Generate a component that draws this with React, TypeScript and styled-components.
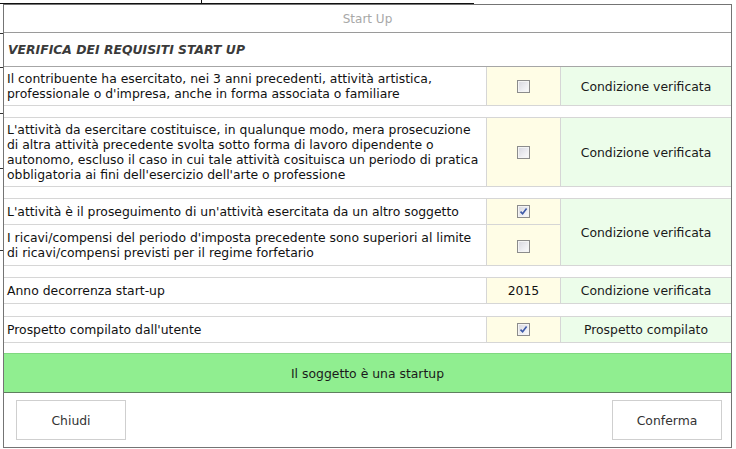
import React from "react";
import styled, { createGlobalStyle } from "styled-components";

const GlobalStyle = createGlobalStyle`
  html, body {
    margin: 0;
    padding: 0;
    background: #fff;
  }
  body {
    font-family: "DejaVu Sans", Verdana, sans-serif;
    font-size: 12.4px;
    color: #111;
  }
`;

type Item = {
  lines: string[];
  height: number;
};

const Check = ({ checked }: { checked?: boolean }) => (
  <Box>
    {checked && (
      <svg width="9" height="9" viewBox="0 0 9 9">
        <path
          d="M1.5 4.6 L3.6 6.8 L7.6 1.4"
          fill="none"
          stroke="#3d5aa8"
          strokeWidth="1.6"
        />
      </svg>
    )}
  </Box>
);

const App = () => {
  const first: Item = {
    lines: [
      "Il contribuente ha esercitato, nei 3 anni precedenti, attività artistica,",
      "professionale o d'impresa, anche in forma associata o familiare",
    ],
    height: 38,
  };
  const second: Item = {
    lines: [
      "L'attività da esercitare costituisce, in qualunque modo, mera prosecuzione",
      "di altra attività precedente svolta sotto forma di lavoro dipendente o",
      "autonomo, escluso il caso in cui tale attività cosituisca un periodo di pratica",
      "obbligatoria ai fini dell'esercizio dell'arte o professione",
    ],
    height: 68,
  };

  return (
    <>
      <GlobalStyle />
      <Page>
        <Dialog>
          <TitleBar>Start Up</TitleBar>
          <SectionHeader>VERIFICA DEI REQUISITI START UP</SectionHeader>

          <Row $height={first.height}>
            <TextCell>
              {first.lines.map((l) => (
                <div key={l}>{l}</div>
              ))}
            </TextCell>
            <CheckCell>
              <Check />
            </CheckCell>
            <StatusCell>Condizione verificata</StatusCell>
          </Row>
          <Spacer $height={11} />

          <Row $height={second.height}>
            <TextCell>
              {second.lines.map((l) => (
                <div key={l}>{l}</div>
              ))}
            </TextCell>
            <CheckCell>
              <Check />
            </CheckCell>
            <StatusCell>Condizione verificata</StatusCell>
          </Row>
          <Spacer $height={11} />

          <GroupRow>
            <TextCell $split>
              <div>L'attività è il proseguimento di un'attività esercitata da un altro soggetto</div>
            </TextCell>
            <CheckCell $split>
              <Check checked />
            </CheckCell>
            <GroupStatus>Condizione verificata</GroupStatus>
            <TextCell>
              <div>I ricavi/compensi del periodo d'imposta precedente sono superiori al limite</div>
              <div>di ricavi/compensi previsti per il regime forfetario</div>
            </TextCell>
            <CheckCell $low>
              <Check />
            </CheckCell>
          </GroupRow>
          <Spacer $height={11} />

          <Row $height={25}>
            <TextCell>Anno decorrenza start-up</TextCell>
            <CheckCell>2015</CheckCell>
            <StatusCell>Condizione verificata</StatusCell>
          </Row>
          <Spacer $height={12} />

          <Row $height={25}>
            <TextCell>Prospetto compilato dall'utente</TextCell>
            <CheckCell>
              <Check checked />
            </CheckCell>
            <StatusCell>Prospetto compilato</StatusCell>
          </Row>
          <Gap />

          <Banner>Il soggetto è una startup</Banner>

          <Footer>
            <Button>Chiudi</Button>
            <Button>Conferma</Button>
          </Footer>
        </Dialog>
      </Page>
    </>
  );
};

export default App;

const Page = styled.div`
  position: relative;
  width: 736px;
  height: 449px;
  overflow: hidden;
  background:
    linear-gradient(#111, #111) 0 3px / 474px 1px no-repeat,
    linear-gradient(#111, #111) 201px 0 / 1px 4px no-repeat,
    linear-gradient(#333, #333) 0 33px / 3px 1px no-repeat,
    linear-gradient(#333, #333) 0 67px / 3px 1px no-repeat,
    linear-gradient(#333, #333) 0 113px / 3px 1px no-repeat,
    linear-gradient(#333, #333) 0 168px / 3px 1px no-repeat,
    linear-gradient(#333, #333) 0 250px / 3px 1px no-repeat,
    #fff;
`;

const Dialog = styled.div`
  position: absolute;
  left: 3px;
  top: 4px;
  width: 729px;
  height: 444px;
  box-sizing: border-box;
  border: 1px solid #747474;
  background: #fff;
  display: flex;
  flex-direction: column;
`;

const TitleBar = styled.div`
  height: 28px;
  box-sizing: border-box;
  border-bottom: 1px solid #9a9a9a;
  display: flex;
  align-items: center;
  justify-content: center;
  color: #a8a8a8;
  font-size: 12px;
`;

const SectionHeader = styled.div`
  height: 34px;
  box-sizing: border-box;
  border-bottom: 1px solid #a6a6a6;
  display: flex;
  align-items: center;
  padding-left: 4px;
  font-size: 12.4px;
  font-weight: bold;
  font-style: italic;
  color: #3a3a3a;
`;

const Row = styled.div<{ $height: number }>`
  height: ${(p) => p.$height + 1}px;
  box-sizing: border-box;
  border-bottom: 1px solid #d6d6d6;
  display: grid;
  grid-template-columns: 483px 74px 1fr;
`;

const GroupRow = styled.div`
  height: 67px;
  box-sizing: border-box;
  border-bottom: 1px solid #d6d6d6;
  display: grid;
  grid-template-columns: 483px 74px 1fr;
  grid-template-rows: 26px 40px;
`;

const Spacer = styled.div<{ $height: number }>`
  height: ${(p) => p.$height + 1}px;
  box-sizing: border-box;
  border-bottom: 1px solid #d6d6d6;
`;

const Gap = styled.div`
  height: 10px;
`;

const TextCell = styled.div<{ $split?: boolean }>`
  box-sizing: border-box;
  border-right: 1px solid #d6d6d6;
  border-bottom: ${(p) => (p.$split ? "1px solid #d6d6d6" : "none")};
  padding-left: 3px;
  display: flex;
  flex-direction: column;
  justify-content: center;
  line-height: 15px;
  white-space: nowrap;
  color: #111;
`;

const CheckCell = styled.div<{ $split?: boolean; $low?: boolean }>`
  box-sizing: border-box;
  background: #fffde6;
  border-right: 1px solid #d6d6d6;
  border-bottom: ${(p) => (p.$split ? "1px solid #d6d6d6" : "none")};
  display: flex;
  align-items: center;
  justify-content: center;
  padding-top: ${(p) => (p.$low ? "2px" : "0")};
  color: #111;
`;

const StatusCell = styled.div`
  background: #ecfdea;
  display: flex;
  align-items: center;
  justify-content: center;
  color: #1a1a1a;
`;

const GroupStatus = styled(StatusCell)`
  grid-column: 3;
  grid-row: 1 / 3;
  align-items: flex-start;
  padding-top: 26px;
`;

const Box = styled.span`
  width: 13px;
  height: 13px;
  box-sizing: border-box;
  border: 1px solid #8c8c8c;
  background: linear-gradient(135deg, #d6d6de 0%, #eeeef2 60%, #fbfbfb 100%);
  box-shadow: inset 0 0 0 1px #f4f4f4;
  display: inline-flex;
  align-items: center;
  justify-content: center;
`;

const Banner = styled.div`
  height: 40px;
  box-sizing: border-box;
  background: #90ee90;
  border-top: 1px solid #80d880;
  border-bottom: 1px solid #5f7f5f;
  display: flex;
  align-items: center;
  justify-content: center;
  color: #1a1a1a;
`;

const Footer = styled.div`
  flex: 1;
  display: flex;
  align-items: center;
  justify-content: space-between;
  padding: 0 9px 0 12px;
`;

const Button = styled.button`
  width: 110px;
  height: 40px;
  box-sizing: border-box;
  border: 1px solid #cfcfcf;
  background: #fff;
  font-family: inherit;
  font-size: 12.4px;
  color: #333;
`;
